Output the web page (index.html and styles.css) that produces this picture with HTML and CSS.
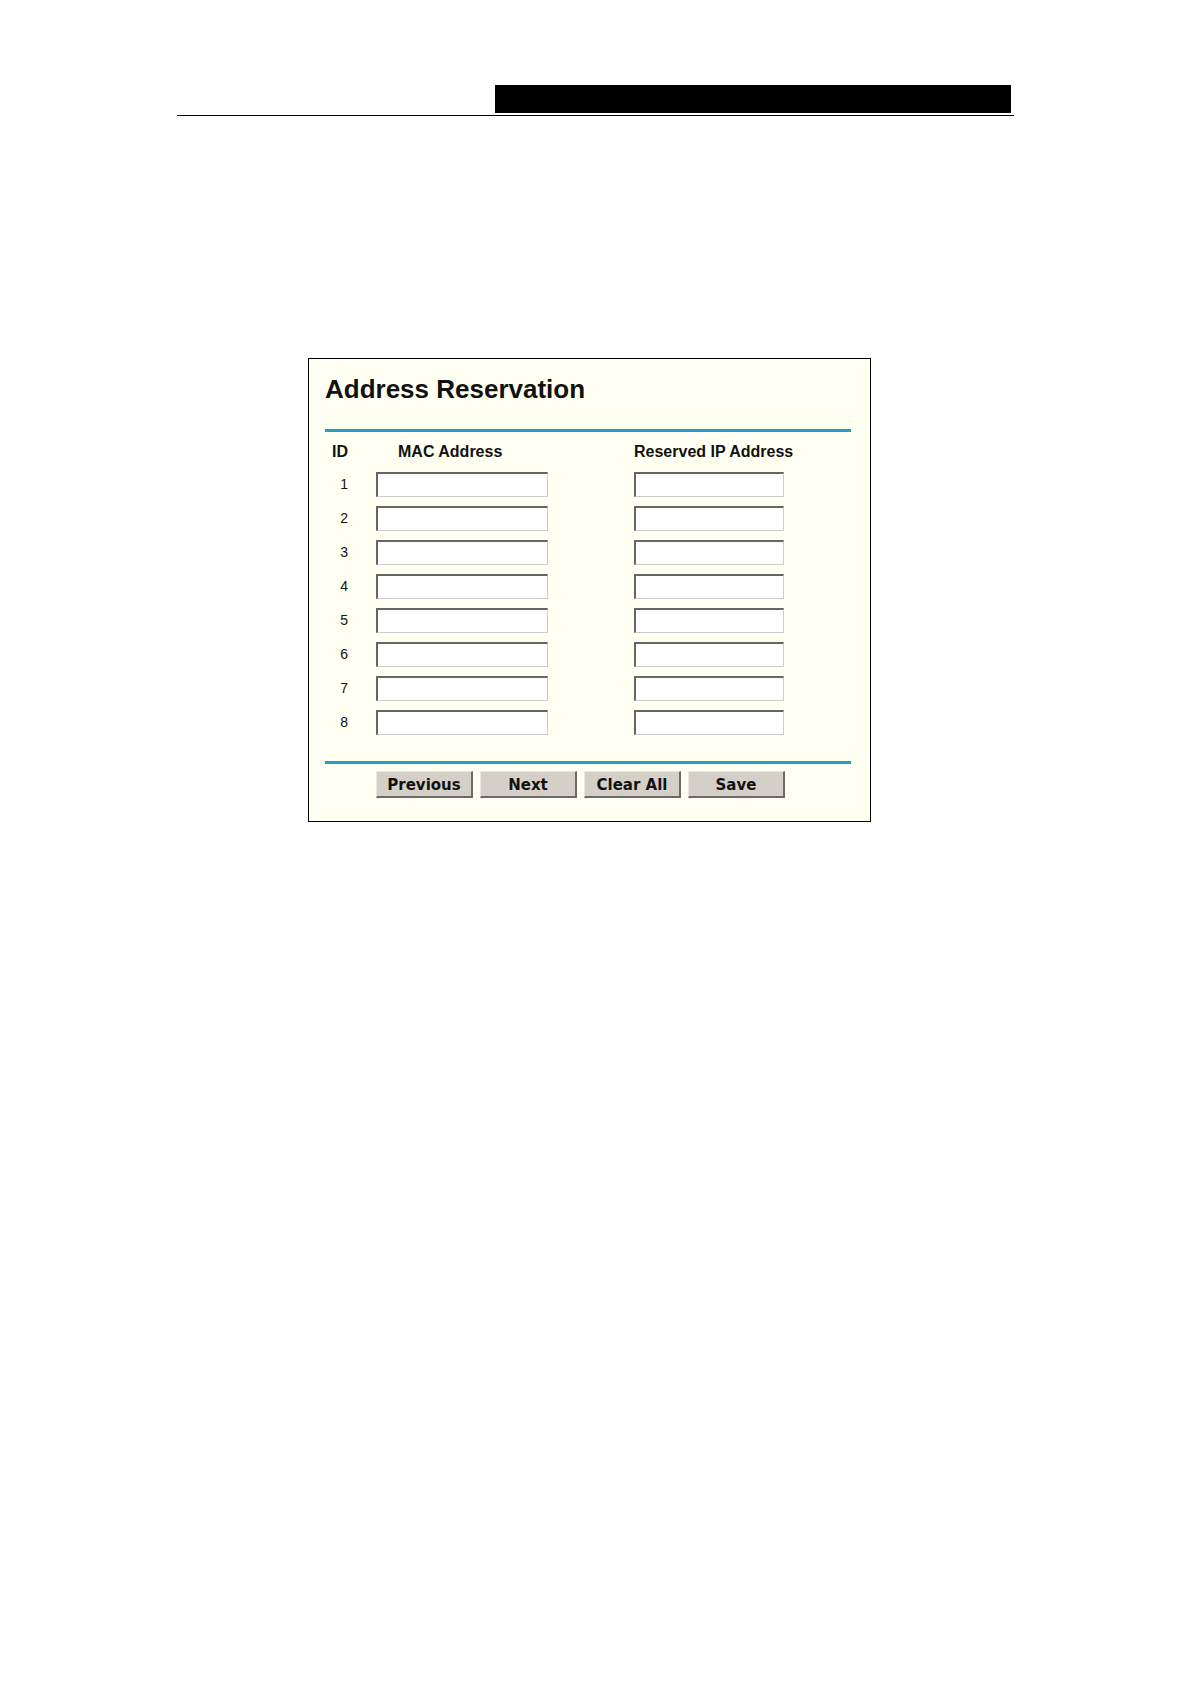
FILE: index.html
```html
<!DOCTYPE html>
<html lang="en">
<head>
<meta charset="utf-8">
<title>Address Reservation</title>
<link rel="stylesheet" href="styles.css">
</head>
<body>
<header class="page-header"><div class="header-band"></div></header>
<main>
<form class="panel">
<h1 class="title">Address Reservation</h1>
<table class="reservations">
<colgroup><col class="col-id"><col class="col-mac"><col></colgroup>
<thead>
<tr><th class="id" scope="col">ID</th><th class="mac-head" scope="col">MAC Address</th><th scope="col">Reserved IP Address</th></tr>
</thead>
<tbody>
<tr><td class="id">1</td><td><input class="field mac" type="text" aria-label="MAC Address 1"></td><td><input class="field ip" type="text" aria-label="Reserved IP Address 1"></td></tr>
<tr><td class="id">2</td><td><input class="field mac" type="text" aria-label="MAC Address 2"></td><td><input class="field ip" type="text" aria-label="Reserved IP Address 2"></td></tr>
<tr><td class="id">3</td><td><input class="field mac" type="text" aria-label="MAC Address 3"></td><td><input class="field ip" type="text" aria-label="Reserved IP Address 3"></td></tr>
<tr><td class="id">4</td><td><input class="field mac" type="text" aria-label="MAC Address 4"></td><td><input class="field ip" type="text" aria-label="Reserved IP Address 4"></td></tr>
<tr><td class="id">5</td><td><input class="field mac" type="text" aria-label="MAC Address 5"></td><td><input class="field ip" type="text" aria-label="Reserved IP Address 5"></td></tr>
<tr><td class="id">6</td><td><input class="field mac" type="text" aria-label="MAC Address 6"></td><td><input class="field ip" type="text" aria-label="Reserved IP Address 6"></td></tr>
<tr><td class="id">7</td><td><input class="field mac" type="text" aria-label="MAC Address 7"></td><td><input class="field ip" type="text" aria-label="Reserved IP Address 7"></td></tr>
<tr><td class="id">8</td><td><input class="field mac" type="text" aria-label="MAC Address 8"></td><td><input class="field ip" type="text" aria-label="Reserved IP Address 8"></td></tr>
</tbody>
</table>
<div class="actions">
<button class="button" type="button">Previous</button>
<button class="button" type="button">Next</button>
<button class="button" type="button">Clear All</button>
<button class="button" type="button">Save</button>
</div>
</form>
</main>
</body>
</html>
```
FILE: styles.css
```css
* {
  box-sizing: border-box;
}

body {
  margin: 0;
  padding: 85px 176px 40px 177px;
  background: #fff;
  color: #111;
  font: 14px/18px "Liberation Sans", Arial, sans-serif;
}

.page-header {
  display: flex;
  justify-content: flex-end;
  padding: 0 3px 2px 0;
  border-bottom: 1px solid #000;
}

.header-band {
  width: 516px;
  height: 28px;
  background: #000;
}

.panel {
  max-width: 563px;
  margin: 242px 0 0 131px;
  padding: 15px 19px 23px 16px;
  border: 1px solid #000;
  background: #fffff2;
}

.title {
  margin: 0 0 25px;
  font-size: 26px;
  line-height: 30px;
}

.reservations {
  width: 100%;
  table-layout: fixed;
  border-spacing: 0;
  border-top: 3px solid #2a9dc4;
}

.col-id {
  width: 51px;
}

.col-mac {
  width: 258px;
}

th {
  height: 35px;
  padding: 4px 0 0;
  font-size: 16px;
  text-align: left;
  white-space: nowrap;
}

td {
  height: 34px;
  padding: 0;
}

.id {
  padding-right: 28px;
  text-align: right;
}

.mac-head {
  padding-left: 22px;
}

.field {
  display: block;
  height: 25px;
  padding: 0 4px;
  border: solid;
  border-width: 2px 1px 1px 2px;
  border-color: #666660 #ccc #ccc #666660;
  background: #fff;
  font: inherit;
}

.mac {
  width: 172px;
}

.ip {
  width: 150px;
}

.actions {
  display: flex;
  gap: 7px;
  margin-top: 22px;
  padding: 7px 0 0 51px;
  border-top: 3px solid #2a9dc4;
}

.button {
  width: 97px;
  height: 27px;
  padding: 2px 0 0;
  border: solid;
  border-width: 1px 2px 2px 1px;
  border-color: #e8e6e0 #6b6a64 #6b6a64 #e8e6e0;
  background: #d4d0c8;
  color: #111;
  font: bold 15px/18px "DejaVu Sans", Verdana, sans-serif;
}
```
